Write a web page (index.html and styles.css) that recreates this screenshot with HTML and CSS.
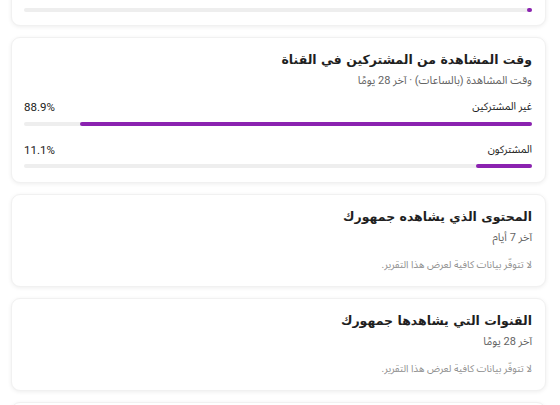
FILE: index.html
```html
<!DOCTYPE html>
<html lang="ar" dir="rtl">
<head>
<meta charset="utf-8">
<link rel="stylesheet" href="styles.css">
</head>
<body>
<main class="list">
  <section class="card card-top">
    <div class="track"><div class="fill" style="width:1%"></div></div>
  </section>

  <section class="card">
    <h2 class="title">وقت المشاهدة من المشتركين في القناة</h2>
    <p class="sub">وقت المشاهدة (بالساعات) · آخر 28 يومًا</p>
    <div class="row first">
      <span class="label">غير المشتركين</span>
      <span class="pct">88.9%</span>
    </div>
    <div class="track"><div class="fill" style="width:88.9%"></div></div>
    <div class="row second">
      <span class="label">المشتركون</span>
      <span class="pct">11.1%</span>
    </div>
    <div class="track tight"><div class="fill" style="width:11.1%"></div></div>
  </section>

  <section class="card">
    <h2 class="title">المحتوى الذي يشاهده جمهورك</h2>
    <p class="sub">آخر 7 أيام</p>
    <p class="empty">لا تتوفّر بيانات كافية لعرض هذا التقرير.</p>
  </section>

  <section class="card">
    <h2 class="title">القنوات التي يشاهدها جمهورك</h2>
    <p class="sub">آخر 28 يومًا</p>
    <p class="empty">لا تتوفّر بيانات كافية لعرض هذا التقرير.</p>
  </section>

  <section class="card"></section>
</main>
</body>
</html>
```

FILE: styles.css
```css
* { box-sizing: border-box; }
html, body { margin: 0; padding: 0; background: #ffffff; }
body {
  font-family: "Roboto", "Noto Sans Arabic", "DejaVu Sans", sans-serif;
  color: #202020;
  direction: rtl;
  overflow: hidden;
  height: 405px;
}
.list {
  display: flex;
  flex-direction: column;
  gap: 11px;
  padding: 0 14px 0 11px;
}
.card {
  background: #fff;
  border: 1px solid #f1f1f1;
  border-radius: 9px;
  box-shadow: 0 1px 4px rgba(0, 0, 0, 0.07);
  padding: 13px 13px 14px 12px;
  min-height: 40px;
}
.card-top {
  margin-top: -30px;
  padding-top: 37px;
  padding-bottom: 13px;
}
.title {
  margin: 0;
  font-family: "DejaVu Sans", sans-serif;
  font-size: 12.5px;
  line-height: 18px;
  font-weight: bold;
  color: #1f1f1f;
}
.sub {
  margin: 4px 0 0;
  font-size: 11px;
  line-height: 15px;
  color: #646464;
}
.row {
  display: flex;
  justify-content: space-between;
  align-items: center;
  font-size: 10.5px;
  line-height: 14px;
  color: #202020;
}
.row.first { margin-top: 12px; }
.row.second { margin-top: 17px; }
.pct { direction: ltr; font-size: 11.5px; }
.track {
  margin-top: 8px;
  height: 4px;
  border-radius: 2px;
  background: #eeeeee;
  display: flex;
}
.track.tight { margin-top: 7px; }
.card-top .track { margin-top: 0; }
.fill {
  height: 4px;
  min-width: 4px;
  border-radius: 2px;
  background: #8b22b0;
}
.empty {
  margin: 13px 0 0;
  font-size: 10px;
  line-height: 14px;
  color: #8f8f8f;
}
```
